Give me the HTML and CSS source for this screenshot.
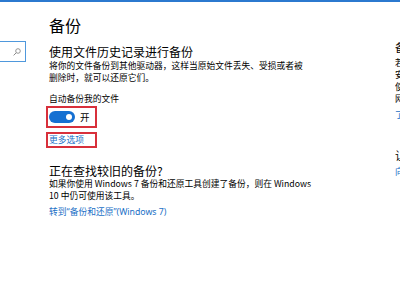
FILE: index.html
```html
<!DOCTYPE html>
<html lang="zh-CN">
<head>
<meta charset="utf-8">
<title>备份</title>
<link rel="stylesheet" href="styles.css">
</head>
<body>
<div class="topbar"></div>
<div class="page">
  <aside class="nav">
    <div class="search">
      <svg class="search-icon" width="8" height="8" viewBox="0 0 8 8" aria-hidden="true">
        <circle cx="5" cy="3" r="2.3" fill="none" stroke="#8a8a8a" stroke-width="0.9"/>
        <line x1="3.3" y1="4.7" x2="0.6" y2="7.4" stroke="#8a8a8a" stroke-width="1"/>
      </svg>
    </div>
  </aside>
  <main class="main">
    <h1 class="title">备份</h1>
    <h2 class="heading">使用文件历史记录进行备份</h2>
    <p class="text">将你的文件备份到其他驱动器，这样当原始文件丢失、受损或者被删除时，就可以还原它们。</p>
    <div class="label">自动备份我的文件</div>
    <div class="mark mark-toggle">
      <span class="toggle"><span class="knob"></span></span>
      <span class="toggle-text">开</span>
    </div>
    <div class="mark mark-link">
      <a class="link" href="#">更多选项</a>
    </div>
    <h2 class="heading heading-2">正在查找较旧的备份?</h2>
    <p class="text text-2">如果你使用 Windows 7 备份和还原工具创建了备份，则在 Windows 10 中仍可使用该工具。</p>
    <a class="link link-block" href="#">转到“备份和还原”(Windows 7)</a>
  </main>
  <aside class="side">
    <h3 class="side-heading">备份文件</h3>
    <p class="side-text">若要从备份中还原文件，<br>安装驱动器后，<br>使用文件历史记录，<br>网络位置等。</p>
    <a class="link side-link" href="#">了解详细信息</a>
    <h3 class="side-heading side-heading-2">让 Windows 变得更好</h3>
    <a class="link side-link" href="#">向我们提供反馈</a>
  </aside>
</div>
</body>
</html>
```

FILE: styles.css
```css
html, body {
  margin: 0;
  padding: 0;
  background: #ffffff;
  overflow: hidden;
}

body {
  width: 400px;
  height: 281px;
  font-family: "Noto Sans CJK SC", "Noto Sans", sans-serif;
  color: #000000;
}

.topbar {
  height: 2px;
  background: #2b79cf;
}

.page {
  display: grid;
  grid-template-columns: 26px 323px 220px;
  column-gap: 23px;
}

.nav {
  display: flex;
  justify-content: flex-end;
  overflow: hidden;
  padding-top: 39px;
}

.search {
  flex: none;
  width: 150px;
  height: 21px;
  box-sizing: border-box;
  border: 1.5px solid #4f98dc;
  display: flex;
  align-items: center;
  justify-content: flex-end;
  padding-right: 4px;
}

.search-icon {
  display: block;
}

.main {
  padding-top: 13px;
}

.title {
  margin: 0;
  font-size: 16px;
  line-height: 20px;
  font-weight: 400;
}

.heading {
  margin: 10px 0 0;
  font-size: 12px;
  line-height: 14px;
  font-weight: 400;
}

.text {
  margin: 0;
  padding-top: 0.5px;
  font-size: 8.75px;
  line-height: 12.5px;
  max-width: 262px;
}

.label {
  margin-top: 8.5px;
  font-size: 8.75px;
  line-height: 12.5px;
}

.mark {
  box-sizing: border-box;
  width: 51px;
  margin-left: -3px;
  border: 2px solid #d8303b;
  display: flex;
  align-items: center;
  padding-left: 1px;
}

.mark-toggle {
  height: 22px;
  gap: 5px;
}

.mark-link {
  height: 16px;
  margin-top: 4px;
}

.toggle {
  width: 26px;
  height: 12px;
  border-radius: 6px;
  background: #1570d2;
  display: flex;
  align-items: center;
  justify-content: flex-end;
  padding-right: 3px;
  box-sizing: border-box;
}

.knob {
  width: 6px;
  height: 6px;
  border-radius: 50%;
  background: #ffffff;
}

.toggle-text {
  font-size: 9.5px;
  line-height: 12px;
}

.link {
  color: #1a6fc6;
  text-decoration: none;
  font-size: 8.75px;
  line-height: 12px;
}

.heading-2 {
  margin-top: 16px;
}

.text-2 {
  line-height: 12px;
  max-width: 266px;
}

.link-block {
  display: block;
  margin-top: 3.5px;
  font-family: "Noto Sans", "Noto Sans CJK SC", sans-serif;
}

.side {
  padding-top: 38px;
  white-space: nowrap;
  overflow: hidden;
}

.side-heading {
  margin: 0;
  font-size: 11px;
  line-height: 14px;
  font-weight: 400;
}

.side-text {
  margin: 3px 0 0;
  font-size: 8.75px;
  line-height: 12px;
}

.side-link {
  display: block;
  margin-top: 4px;
}

.side-heading-2 {
  margin-top: 27px;
}
```
